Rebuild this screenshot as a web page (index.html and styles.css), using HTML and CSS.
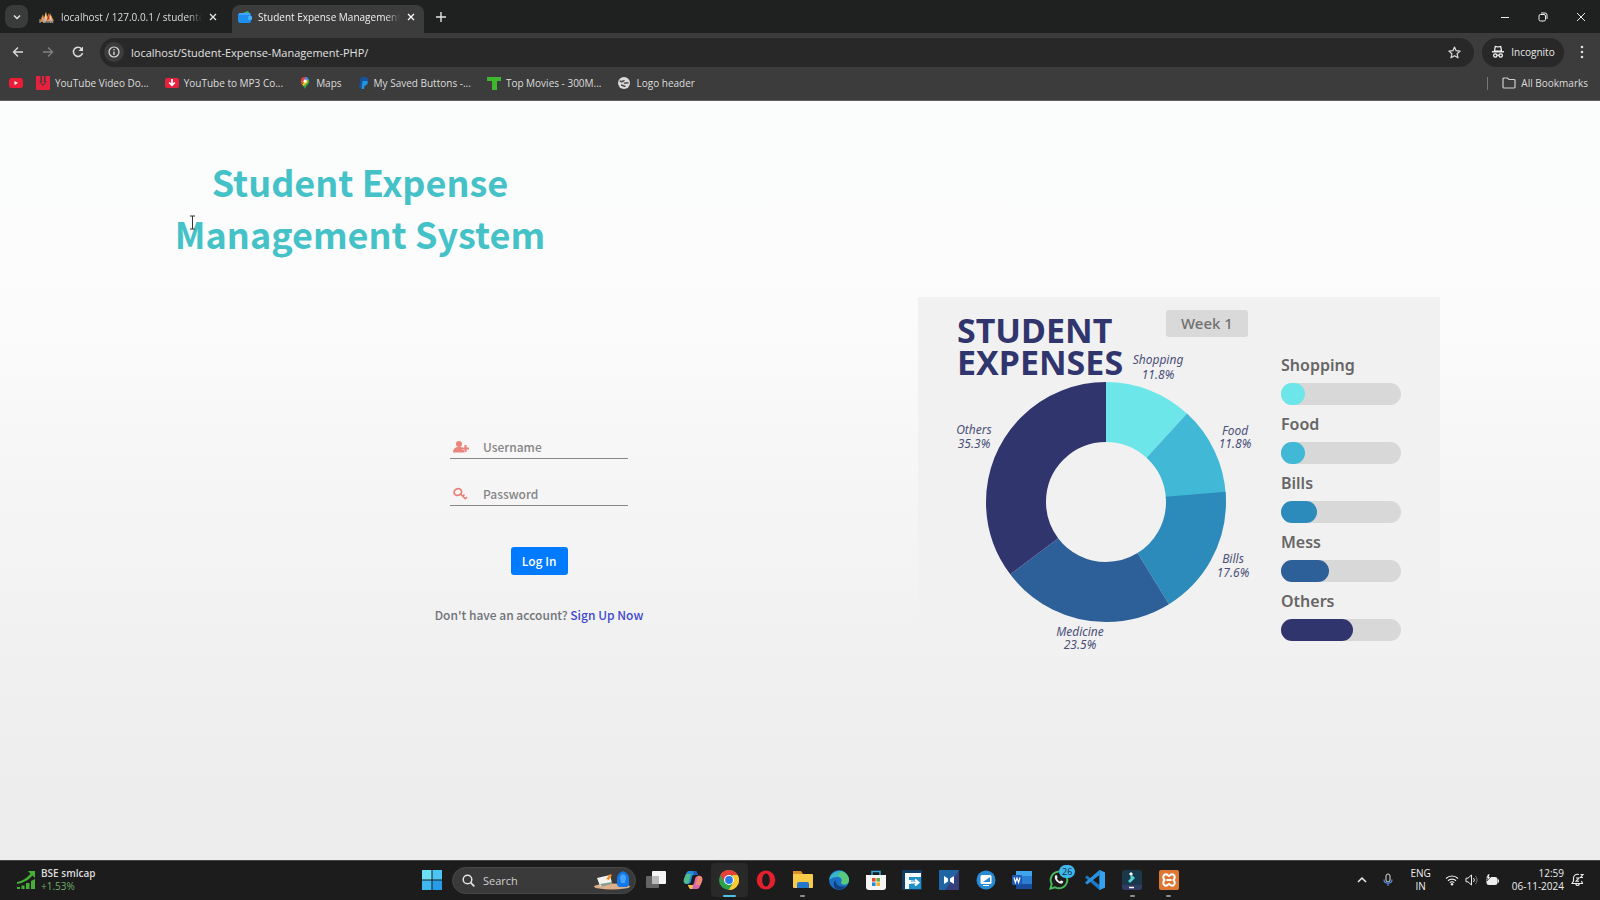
FILE: index.html
```html
<!DOCTYPE html>
<html lang="en">
<head>
<meta charset="utf-8">
<title>Student Expense Management System</title>
<link rel="stylesheet" href="styles.css">
</head>
<body>
<header class="browser">
  <div class="tabstrip">
    <button class="tab-search" aria-label="Search tabs"><svg width="10" height="10" viewBox="0 0 10 10"><path d="M2 3.5l3 3 3-3" fill="none" stroke="#e4e4e4" stroke-width="1.5"/></svg></button>
    <div class="tab">
      <svg class="fav" width="16" height="14" viewBox="0 0 16 14"><path d="M1 12L4 4l1 4 2-6 1 5 2-4 1 5 1-3 3 6z" fill="#e8862d"/><path d="M5 10l2-8 1 8zM10 10l1-7 2 7z" fill="#f3d6ab"/><path d="M8 10l2-6 .6 6z" fill="#d52d22"/><path d="M1 9v4M3 7l2 6 1-5 1 5M9 13v-3h2v3M12 13v-4l2 4" stroke="#b9b3ad" fill="none"/></svg>
      <span class="tab-title">localhost / 127.0.0.1 / studentexpense</span>
      <button class="x" aria-label="Close tab"><svg width="8" height="8" viewBox="0 0 8 8"><path d="M1 1l6 6M7 1l-6 6" stroke="#e4e4e4" stroke-width="1.3"/></svg></button>
    </div>
    <div class="tab active">
      <svg class="fav" width="14" height="14" viewBox="0 0 14 14"><path d="M2 4l8-3 2 3z" fill="#38b36b"/><rect y="3" width="13" height="10" rx="2" fill="#1f8fef"/><path d="M1 4h11" stroke="#64b8ff"/><rect x="10" y="6" width="4" height="4" rx="1" fill="#47b1ff"/></svg>
      <span class="tab-title">Student Expense Management System</span>
      <button class="x" aria-label="Close tab"><svg width="8" height="8" viewBox="0 0 8 8"><path d="M1 1l6 6M7 1l-6 6" stroke="#fff" stroke-width="1.3"/></svg></button>
    </div>
    <button class="newtab" aria-label="New tab"><svg width="10" height="10" viewBox="0 0 10 10"><path d="M5 0v10M0 5h10" stroke="#e4e4e4" stroke-width="1.4"/></svg></button>
    <div class="winbtns">
      <button aria-label="Minimize"><svg width="10" height="10" viewBox="0 0 10 10"><path d="M1 5.5h8" stroke="#eee"/></svg></button>
      <button aria-label="Restore"><svg width="10" height="10" viewBox="0 0 10 10"><rect x="1" y="2.5" width="6.5" height="6.5" rx="1.5" fill="none" stroke="#eee"/><path d="M3 1h4a2 2 0 0 1 2 2v4" fill="none" stroke="#eee"/></svg></button>
      <button aria-label="Close"><svg width="10" height="10" viewBox="0 0 10 10"><path d="M1 1l8 8M9 1l-8 8" stroke="#eee"/></svg></button>
    </div>
  </div>
  <div class="toolbar">
    <button class="nav" aria-label="Back"><svg width="12" height="12" viewBox="0 0 12 12"><path d="M11 6H2M6 1.5L1.500 6 6 10.500" fill="none" stroke="#dcdcdc" stroke-width="1.4"/></svg></button>
    <button class="nav" aria-label="Forward"><svg width="12" height="12" viewBox="0 0 12 12"><path d="M1 6h9M6 1.500L10.500 6 6 10.500" fill="none" stroke="#808080" stroke-width="1.400"/></svg></button>
    <button class="nav" aria-label="Reload"><svg width="12" height="12" viewBox="0 0 12 12"><path d="M10.500 7A4.600 4.600 0 1 1 9.500 2.800" fill="none" stroke="#dcdcdc" stroke-width="1.500"/><path d="M11 .5v4.500H6.500z" fill="#dcdcdc"/></svg></button>
    <div class="omnibox">
      <button class="info" aria-label="Site information"><svg width="12" height="12" viewBox="0 0 12 12"><circle cx="6" cy="6" r="5" fill="none" stroke="#dcdcdc" stroke-width="1.200"/><path d="M6 5.400V9M6 3v1.300" stroke="#dcdcdc" stroke-width="1.300"/></svg></button>
      <input class="url" aria-label="Address" value="localhost/Student-Expense-Management-PHP/">
      <button class="star" aria-label="Bookmark"><svg width="13" height="13" viewBox="0 0 13 13"><path d="M6.500 1l1.600 3.700 4 .4-3 2.700.9 4-3.500-2.100L3 11.800l.9-4-3-2.700 4-.4z" fill="none" stroke="#dcdcdc" stroke-width="1.200" stroke-linejoin="round"/></svg></button>
    </div>
    <button class="incog"><svg width="14" height="14" viewBox="0 0 14 14"><path d="M3.500 6l.8-4.500L7 2l2.700-.5.8 4.500z" fill="none" stroke="#fff" stroke-width="1.200"/><path d="M1 6.800h12" stroke="#fff" stroke-width="1.300"/><circle cx="4.300" cy="10.500" r="1.700" fill="none" stroke="#fff" stroke-width="1.200"/><circle cx="9.700" cy="10.500" r="1.700" fill="none" stroke="#fff" stroke-width="1.200"/><path d="M6 10.200h2" stroke="#fff"/></svg>Incognito</button>
    <button class="kebab" aria-label="Menu"><svg width="4" height="14" viewBox="0 0 4 14"><g fill="#dcdcdc"><circle cx="2" cy="2" r="1.300"/><circle cx="2" cy="7" r="1.300"/><circle cx="2" cy="12" r="1.300"/></g></svg></button>
  </div>
  <nav class="bookmarks" aria-label="Bookmarks">
    <a href="#" aria-label="YouTube"><svg width="14" height="10" viewBox="0 0 14 10"><rect width="14" height="10" rx="2.500" fill="#ea1c38"/><path d="M5.500 3v4l3.500-2z" fill="#fff"/></svg></a>
    <a href="#"><svg width="14" height="14" viewBox="0 0 14 14"><rect width="14" height="14" rx="1" fill="#e8223e"/><path d="M4.500 0v5.500H3l4 4.500 4-4.500H9.500V0H8v5H6V0z" fill="#3c3c3c"/><path d="M6.300 0h1.400v6h1.800L7 8.500 4.500 6h1.800z" fill="#e8223e"/></svg>YouTube Video Do...</a>
    <a href="#"><svg width="14" height="14" viewBox="0 0 14 14"><rect y="2" width="14" height="10" rx="2" fill="#e8223e"/><path d="M7 3v6M4.200 6.500L7 9.300l2.800-2.800" stroke="#fff" stroke-width="1.700" fill="none"/></svg>YouTube to MP3 Co...</a>
    <a href="#"><svg width="12" height="14" viewBox="0 0 12 14"><path d="M6 1a4.300 4.300 0 0 1 4.300 4.300C10.300 8.500 7.500 9 6 13c-.8-2-1.500-3-2.500-4z" fill="#34a853"/><path d="M2 3.200A4.300 4.300 0 0 1 6 1v4z" fill="#ea4335"/><path d="M6 1a4.300 4.300 0 0 1 3.700 2.200L6 7z" fill="#4285f4"/><path d="M2.400 2.800L5 5.500 3 8.500C1.500 7 1.300 4.500 2.400 2.800z" fill="#ea4335"/><path d="M3 8.500L8 3.500 9 6 4.500 10z" fill="#fbbc04"/><circle cx="6" cy="5.200" r="1.600" fill="#fff"/></svg>Maps</a>
    <a href="#"><svg width="11" height="14" viewBox="0 0 11 14"><path d="M3 1h4c2.500 0 3.500 1.500 3 3.500S8 8 6 8H4l-.8 4H1z" fill="#17529e"/><path d="M4.500 5h4.500c1.500 0 1 4.800-2.500 4.800L6 13H3.500z" fill="#1b97e4"/></svg>My Saved Buttons -...</a>
    <a href="#"><svg width="14" height="14" viewBox="0 0 14 14"><path d="M0 1h14v4h-4v9H5V5H0z" fill="#3fb62f"/></svg>Top Movies - 300M...</a>
    <a href="#"><svg width="14" height="14" viewBox="0 0 14 14"><circle cx="7" cy="7" r="6" fill="#dadada"/><path d="M3 4.500c1.500 3 3-.5 4.500.5M7 7.500c1.500-1.500 3 .5 4.500-1M4 9c2 0 2.500 2 4.500 1" stroke="#454545" stroke-width="1.500" fill="none"/></svg>Logo header</a>
    <a href="#" class="all"><svg width="14" height="12" viewBox="0 0 14 12"><path d="M1 2.500V10a1 1 0 0 0 1 1h10a1 1 0 0 0 1-1V3.500a1 1 0 0 0-1-1H7L5.500 1H2a1 1 0 0 0-1 1z" fill="none" stroke="#d0d0d0" stroke-width="1.200"/></svg>All Bookmarks</a>
  </nav>
</header>

<main class="page">
  <section class="login">
    <h1>Student Expense<br>Management System</h1>
    <form class="form">
      <label class="field"><svg width="16" height="14" viewBox="0 0 16 14"><g fill="#ea857e"><circle cx="6" cy="4" r="3"/><path d="M0 12.500C0 9 2 7 6 7s5.500 2 5.500 5.500z"/></g><path d="M12.500 5v7M9 8.500h7" stroke="#f8f8f8" stroke-width="3"/><path d="M12.500 5v7M9 8.500h7" stroke="#ea857e" stroke-width="2.200"/></svg><input type="text" placeholder="Username" aria-label="Username"></label>
      <label class="field"><svg width="16" height="14" viewBox="0 0 16 14"><g fill="none" stroke="#ec7d75" stroke-width="1.700"><ellipse cx="4.800" cy="5" rx="3.800" ry="3.300" transform="rotate(-25 4.800 5)"/><path d="M7 6.500l5.500 5.500M9.500 9.500l2-2M12 12l2-2"/></g></svg><input type="password" placeholder="Password" aria-label="Password"></label>
      <button class="submit" type="button">Log In</button>
      <p class="signup">Don't have an account? <a href="#">Sign Up Now</a></p>
    </form>
  </section>

  <section class="summary">
    <figure class="card">
      <div class="chart">
        <div class="chart-head">
          <h2>STUDENT<br>EXPENSES</h2>
          <span class="week">Week 1</span>
        </div>
        <svg class="donut" viewBox="0 50 340 310">
          <g fill="none" stroke-width="60" transform="rotate(-90 188 205)">
            <circle cx="188" cy="205" r="90" pathLength="100" stroke="#6ce6e8" stroke-dasharray="11.800 100"/>
            <circle cx="188" cy="205" r="90" pathLength="100" stroke="#41b8d5" stroke-dasharray="12.300 100" stroke-dashoffset="-11.800"/>
            <circle cx="188" cy="205" r="90" pathLength="100" stroke="#2c8bba" stroke-dasharray="17.600 100" stroke-dashoffset="-23.600"/>
            <circle cx="188" cy="205" r="90" pathLength="100" stroke="#2d5f98" stroke-dasharray="23.500 100" stroke-dashoffset="-41.200"/>
            <circle cx="188" cy="205" r="90" pathLength="100" stroke="#31356e" stroke-dasharray="35.300 100" stroke-dashoffset="-64.700"/>
          </g>
          <g class="slice-labels">
            <text x="240" y="67">Shopping</text><text x="240" y="82">11.8%</text>
            <text x="317" y="138">Food</text><text x="317" y="151">11.8%</text>
            <text x="315" y="266">Bills</text><text x="315" y="280">17.6%</text>
            <text x="162" y="339">Medicine</text><text x="162" y="352">23.5%</text>
            <text x="56" y="137">Others</text><text x="56" y="151">35.3%</text>
          </g>
        </svg>
      </div>
      <ul class="legend">
        <li>Shopping<div class="bar"><div class="fill shopping" style="width:20%"></div></div></li>
        <li>Food<div class="bar"><div class="fill food" style="width:20%"></div></div></li>
        <li>Bills<div class="bar"><div class="fill bills" style="width:30%"></div></div></li>
        <li>Mess<div class="bar"><div class="fill mess" style="width:40%"></div></div></li>
        <li>Others<div class="bar"><div class="fill others" style="width:60%"></div></div></li>
      </ul>
    </figure>
  </section>
  <svg class="cursor" width="7" height="15" viewBox="0 0 7 15"><path d="M1 1h5M3.500 1v13M1 14h5" stroke="#333" fill="none"/></svg>
</main>

<footer class="taskbar">
  <div class="widget">
    <svg width="20" height="20" viewBox="0 0 20 20"><g fill="#45b035"><path d="M12 1h7v7l-2.500-2.500C13 10 7 13 1 14v-2c5-1 10-4 13.500-8z"/><rect x="1" y="17" width="3" height="2"/><rect x="5.500" y="15.500" width="3" height="3.500"/><rect x="10" y="13" width="3.500" height="6"/><path d="M15 11l4-2v10h-4z"/></g></svg>
    <div><b>BSE smlcap</b><span>+1.53%</span></div>
  </div>
  <div class="center">
    <button class="start" aria-label="Start"><svg width="20" height="20" viewBox="0 0 20 20"><path d="M0 0h9.500v9.500H0z" fill="#6be0f7"/><path d="M10.500 0H20v9.500h-9.500z" fill="#4cc5f4"/><path d="M0 10.500h9.500V20H0z" fill="#3fb7f1"/><path d="M10.500 10.500H20V20h-9.500z" fill="#279ce9"/></svg></button>
    <label class="search"><svg width="13" height="13" viewBox="0 0 13 13"><circle cx="5.500" cy="5.500" r="4.300" fill="none" stroke="#e4e4e4" stroke-width="1.500"/><path d="M8.700 8.700l3.600 3.600" stroke="#e4e4e4" stroke-width="1.700"/></svg><input type="text" placeholder="Search" aria-label="Search"><svg width="38" height="20" viewBox="0 0 38 20"><ellipse cx="19" cy="16.500" rx="18" ry="3" fill="#dcb08c"/><path d="M4 8l13-3 2 8-12 3z" fill="#f2f2ee"/><path d="M7 14l12-2v2L9 16.500z" fill="#8c9b8b"/><path d="M13 9l4-5 2 1-3 5z" fill="#ee932f"/><path d="M24 8q0-4 6-7 6 3 6 7v7l-2 2h-8l-2-2z" fill="#1578e8"/><path d="M27 8q0-3 3-4 3 1 3 4l-1 5h-4z" fill="#45a3ff"/></svg></label>
    <div class="apps">
      <button aria-label="Task View"><svg width="20" height="20" viewBox="0 0 20 20"><rect x="6" y="1" width="14" height="13" rx="1" fill="#f4f4f4"/><rect x="0" y="6" width="13" height="12" rx="1" fill="#777" opacity=".8"/><rect x="6" y="6" width="7" height="8" fill="#b9b9b9"/></svg></button>
      <button aria-label="Copilot"><svg width="20" height="20" viewBox="0 0 20 20"><path d="M6 1h6c2 0 2 2 3 4h-4c-2 0-2 2-3 6-1 3-2 3-4 3-3 0-4-2-3-5l2-5c.6-2 1.500-3 3-3z" fill="#248fd8"/><path d="M1 9l2-5h5L5.500 13C3 15 0 13 1 9z" fill="#54bc8a"/><path d="M14 19H8c-2 0-2-2-3-4h4c2 0 2-2 3-6 1-3 2-3 4-3 3 0 4 2 3 5l-2 5c-.6 2-1.500 3-3 3z" fill="#d768ae"/><path d="M5 15h5l-1 4c-3 0-3-2-4-4z" fill="#f6c443"/><path d="M15 6c3-1 5 2 4 5l-1.500 4h-5z" fill="#f08b72"/><path d="M12 1c2 0 2 2 3 4h-4l-1-4z" fill="#2459bd"/></svg></button>
      <button class="current" aria-label="Chrome"><svg width="20" height="20" viewBox="0 0 20 20"><circle cx="10" cy="10" r="10" fill="#2ca14c"/><path d="M10 0a10 10 0 0 1 8.700 5H10L5.700 12.500 1.300 5A10 10 0 0 1 10 0z" fill="#e5403a"/><path d="M18.700 5A10 10 0 0 1 9.700 20L14.300 12.500 13.500 5z" fill="#fccb33"/><circle cx="10" cy="10" r="5" fill="#fff"/><circle cx="10" cy="10" r="3.900" fill="#2878e8"/></svg></button>
      <button aria-label="Opera"><svg width="20" height="20" viewBox="0 0 20 20"><path fill-rule="evenodd" d="M10 .5a9.300 9.500 0 1 0 0 19 9.300 9.500 0 0 0 0-19zm0 3c2.200 0 3.800 3 3.800 6.500s-1.600 6.500-3.800 6.500S6.200 13.500 6.200 10 7.800 3.500 10 3.500z" fill="#e2202f"/></svg></button>
      <button class="open" aria-label="File Explorer"><svg width="20" height="20" viewBox="0 0 20 20"><path d="M0 1h8l2 3h9v5H0z" fill="#de8e2c"/><rect y="4" width="20" height="14" rx="1" fill="#f8cb4b"/><path d="M4 18v-4q0-2 2-2h8q2 0 2 2v4z" fill="#2277cc"/></svg></button>
      <button aria-label="Edge"><svg width="20" height="20" viewBox="0 0 20 20"><circle cx="10" cy="10" r="10" fill="#1c6fc5"/><path d="M.5 8A10 10 0 0 1 20 10c0 3-2 4.500-4.500 4.500S12 13 12.500 11 11 7 8 7 2 8 .5 10z" fill="#38b5c9"/><path d="M12 1c5 1 8 5 8 9s-5 5.500-7 4 0-2 0-4-1-4-4-4z" fill="#59cb78"/><path d="M7 10c-1 4 3 8 10 6-4 5-11 4-12 0-.5-3 0-5 2-6z" fill="#123f82"/></svg></button>
      <button aria-label="Microsoft Store"><svg width="20" height="20" viewBox="0 0 20 20"><path d="M6 5V1.500h8V5" fill="none" stroke="#37a7dd" stroke-width="1.500"/><path d="M0 5h20v12q0 3-3 3H3q-3 0-3-3z" fill="#f5f5f5"/><path d="M6 8h3.600v3.600H6z" fill="#e24a2c"/><path d="M10.400 8H14v3.600h-3.600z" fill="#69aa3e"/><path d="M6 12.400h3.600V16H6z" fill="#268bd2"/><path d="M10.400 12.400H14V16h-3.600z" fill="#f1ae29"/></svg></button>
      <button aria-label="File transfer"><svg width="20" height="20" viewBox="0 0 20 20"><rect width="20" height="20" rx="1" fill="#123c61"/><path d="M3 3h16v16H3z" fill="#2190c9"/><path d="M3 19V3h16v4H7v3h5v4H7v5z" fill="#f5fbff"/><path d="M9 12.500h7M13 9.500l3.500 3-3.500 3" stroke="#2190c9" stroke-width="4" fill="none"/><path d="M8 12.500h8M13 9.500l3.500 3-3.500 3" stroke="#fff" stroke-width="2" fill="none"/></svg></button>
      <button aria-label="Media app"><svg width="20" height="20" viewBox="0 0 20 20"><path d="M0 0h20v20H0z" fill="#2065a3"/><path d="M20 0v20H6z" fill="#373e7e"/><path d="M5 6l4 2.500v3L5 14zM15 6l-4 2.500v3l4 2.500z" fill="#fff"/></svg></button>
      <button aria-label="Remote app"><svg width="20" height="20" viewBox="0 0 20 20"><circle cx="10" cy="10" r="9.500" fill="#2a8bd5"/><rect x="4.500" y="5" width="11" height="9" rx="1.500" fill="#fff"/><path d="M7 12l7-5v5z" fill="#2a8bd5"/><path d="M7 15.500h6" stroke="#fff"/></svg></button>
      <button aria-label="Word"><svg width="20" height="20" viewBox="0 0 20 20"><rect x="4" y="1" width="16" height="18" rx="1" fill="#2b7cd3"/><path d="M4 1h16v5H4z" fill="#41a5ee"/><path d="M4 14h16v5H4z" fill="#174b9b"/><rect y="5" width="10" height="10" rx="1" fill="#1e59b4"/><path d="M2 7.500l1.400 5L5 8l1.600 4.500 1.400-5" fill="none" stroke="#fff" stroke-width="1.200"/></svg></button>
      <button aria-label="WhatsApp"><svg width="20" height="20" viewBox="0 0 20 20"><path d="M1.500 18.500l1.200-4.600a8.300 8.300 0 1 1 3.500 3.400z" fill="none" stroke="#49b95d" stroke-width="2"/><path d="M6 6c1-2 2-.5 2.500 1 .3 1-1 1 0 2.400 1 1.400 2.300 2.500 3 1.600 1-1 1.500-.4 2.500.3 1 .8-1 3-3 2.300C8 12.500 5 9 6 6z" fill="#f2f2f2"/></svg><span class="badge">26</span></button>
      <button aria-label="Visual Studio Code"><svg width="20" height="20" viewBox="0 0 20 20"><path d="M14.500 0L20 2.500v15L14.500 20 0 7.500 2 5.500l12.500 9.500z" fill="#1c78c4"/><path d="M14.500 0v5L2 14.500 0 12.500z" fill="#2a91df"/><path d="M14.500 0L20 2.500v15L14.500 20z" fill="#35a0ee"/></svg></button>
      <button class="open" aria-label="Filmora"><svg width="20" height="20" viewBox="0 0 20 20"><rect width="20" height="20" rx="3" fill="#1b384b"/><path d="M0 15h20v2q0 3-3 3H3q-3 0-3-3z" fill="#303b66"/><path d="M7 4l2-2 2 2-2 2z" fill="#fff"/><path d="M6 11l3-3-1-1 2-2 3 3-5 5z" fill="#55d4d4"/><path d="M7 17.500h5" stroke="#fff" stroke-width="1.500"/></svg></button>
      <button class="open" aria-label="XAMPP"><svg width="20" height="20" viewBox="0 0 20 20"><rect width="20" height="20" rx="2" fill="#dc7833"/><path d="M6 4.500c2.500-1 3 1.500 4 1.500s1.500-2.500 4-1.500 2 4 .500 5.500c1.500 1.500 2 4.500-.500 5.500s-3-1.500-4-1.500-1.500 2.500-4 1.500-2-4-.500-5.500C4 8.500 3.500 5.500 6 4.500z" fill="none" stroke="#fff" stroke-width="2"/><path d="M7.500 10h5" stroke="#fff" stroke-width="2"/></svg></button>
    </div>
  </div>
  <div class="tray">
    <svg width="10" height="8" viewBox="0 0 10 8"><path d="M1 6l4-4 4 4" fill="none" stroke="#eee" stroke-width="1.500"/></svg>
    <svg class="mic" width="10" height="14" viewBox="0 0 10 14"><rect x="3" y="1" width="4" height="8" rx="2" fill="none" stroke="#ddd"/><path d="M1 6.500c0 5 8 5 8 0M5 10.500V13" fill="none" stroke="#4f8ee0" stroke-width="1.200"/></svg>
    <span class="lang">ENG<br>IN</span>
    <div class="status">
      <svg width="14" height="12" viewBox="0 0 14 12"><g fill="none" stroke="#eee" stroke-width="1.200"><path d="M1 4.500a8.500 8.500 0 0 1 12 0M3 6.700a5.700 5.700 0 0 1 8 0M4.800 8.700a3 3 0 0 1 4.400 0"/></g><circle cx="7" cy="10.300" r="1.200" fill="#eee"/></svg>
      <svg width="14" height="12" viewBox="0 0 14 12"><path d="M1 4.200h2L6.500 1v10L3 7.800H1z" fill="none" stroke="#eee"/><path d="M8.500 4a3 3 0 0 1 0 4" fill="none" stroke="#eee"/><path d="M10.500 2a6 6 0 0 1 0 8" fill="none" stroke="#777"/></svg>
      <svg width="14" height="12" viewBox="0 0 14 12"><rect x="2" y="3.500" width="10" height="7" rx="1.500" fill="#eee" stroke="#eee"/><path d="M13.500 5.500v3" stroke="#eee" stroke-width="1.500"/><path d="M3 0L1 4h2L2 7l4-4H4l1-3z" fill="#fff" stroke="#1c1c1c" stroke-width=".6"/></svg>
    </div>
    <span class="clock">12:59<br>06-11-2024</span>
    <svg width="13" height="14" viewBox="0 0 13 14"><path d="M8 1.500C4.500.500 2.500 3 2.500 5v3L1 10.500h10.500L10.500 8M4.800 11c.5 2 3 2 3.500 0M5 5h3l-3 3.300h3M9.500 1.500H12L9.500 4.500H12" fill="none" stroke="#eee" stroke-width="1.100"/></svg>
  </div>
</footer>
</body>
</html>
```
FILE: styles.css
```css
* { box-sizing: border-box; }
body {
  margin: 0;
  min-height: 100vh;
  display: flex;
  flex-direction: column;
  font-family: "Open Sans", "Noto Sans", sans-serif;
  font-size: 11px;
  color: #dcdcdc;
}
button {
  border: 0;
  padding: 0;
  background: none;
  color: inherit;
  font: inherit;
  display: flex;
  align-items: center;
  justify-content: center;
}
input { border: 0; padding: 0; background: none; font: inherit; color: inherit; min-width: 0; outline: 0; }
a { color: inherit; text-decoration: none; }
svg { flex: none; display: block; }

.browser { background: #3c3c3c; border-bottom: 1px solid #606060; font-size: 10px; }
.tabstrip { display: flex; align-items: center; height: 33px; background: #1f2120; padding-left: 5px; }
.tab-search { width: 23px; height: 23px; border-radius: 8px; background: #3a3b3b; margin-right: 5px; }
.tab { display: flex; align-items: center; gap: 6px; width: 199px; height: 28px; padding: 0 14px 4px 6px; align-self: flex-end; }
.tab.active { width: 192px; background: #3c3c3c; border-radius: 8px 8px 0 0; padding: 0 8px 4px 6px; color: #f0f0f0; }
.tab-title {
  flex: 1;
  white-space: nowrap;
  overflow: hidden;
  mask-image: linear-gradient(90deg, #000 90%, transparent);
}
.tab .x { width: 10px; height: 16px; }
.newtab { width: 34px; height: 28px; }
.winbtns { margin-left: auto; display: flex; }
.winbtns button { width: 38px; height: 33px; }

.toolbar { display: flex; align-items: center; height: 38px; padding: 0 12px 0 3px; }
.nav { width: 30px; height: 28px; }
.omnibox { flex: 1; display: flex; align-items: center; height: 29px; border-radius: 16px; background: #282828; margin: 0 8px 0 7px; padding: 0 12px 0 4px; }
.info { width: 20px; height: 20px; border-radius: 50%; background: #3c3c3c; margin-right: 7px; }
.url { flex: 1; font-size: 11px; color: #e2e2e2; }
.star { width: 16px; height: 16px; }
.incog { height: 29px; width: 82px; border-radius: 16px; background: #282828; gap: 6px; color: #e8e8e8; }
.kebab { width: 18px; height: 28px; margin-left: 9px; margin-right: -3px; }

.bookmarks { display: flex; align-items: center; height: 29px; gap: 13px; padding: 0 12px 5px 9px; }
.bookmarks a { display: flex; align-items: center; gap: 5px; margin-right: 3px; white-space: nowrap; }
.bookmarks a:first-child { margin-right: 0; }
.bookmarks .all { margin: 0 0 0 auto; border-left: 1px solid #777; padding-left: 14px; line-height: 13px; }

.page {
  position: relative;
  flex: 1;
  display: grid;
  grid-template-columns: 45% 55%;
  background: linear-gradient(#fbfcfc, #fcfcfc 24%, #f1f1f1 70%, #ececec);
  font-family: "Noto Sans CJK SC", "Noto Sans", sans-serif;
}
.cursor { position: absolute; left: 189px; top: 114px; }
.login { padding-top: 54px; }
h1 { margin: 0; text-align: center; font-size: 36px; line-height: 52px; font-weight: 700; color: #44c2c8; }
.form { width: 178px; margin: 176px 92px 0 auto; display: flex; flex-direction: column; align-items: center; font-size: 12px; font-weight: 500; color: #777; }
.field { display: flex; align-items: center; gap: 14px; width: 100%; height: 24px; padding-left: 3px; border-bottom: 1px solid #888; margin-bottom: 23px; }
.field input { flex: 1; }
.field input::placeholder { color: #868686; opacity: 1; }
.submit { width: 57px; height: 28px; padding-bottom: 2px; border-radius: 3px; background: #007bff; color: #fff; margin-top: 18px; }
.signup { margin: 30px 0 0; line-height: 20px; white-space: nowrap; color: #6f7276; }
.signup a { color: #3f48d0; }

.summary { padding: 196px 160px 0 198px; }
.card { margin: 0; display: flex; background: #f1f1f1; font-family: "Noto Sans", sans-serif; }
.chart { width: 340px; flex: none; }
.chart-head { display: flex; justify-content: space-between; align-items: flex-start; padding: 13px 10px 0 39px; height: 50px; }
h2 { margin: 4px 0 0; font-size: 34px; line-height: 32px; font-weight: 700; color: #31356e; }
.week { width: 82px; line-height: 27px; border-radius: 3px; background: #d9d9d9; color: #707070; font-size: 15px; font-weight: 500; text-align: center; }
.donut { width: 340px; height: 310px; }
.slice-labels { font-size: 12px; font-style: italic; text-anchor: middle; fill: #4c5078; }
.legend { list-style: none; margin: 57px 0 0 23px; padding: 0; width: 120px; font-size: 16px; line-height: 22px; font-weight: 600; color: #666; }
.legend li { margin-bottom: 8px; }
.legend li:last-child { margin-bottom: 0; }
.bar { margin-top: 7px; height: 22px; border-radius: 11px; background: #d8d8d8; }
.fill { height: 100%; border-radius: 11px; }
.shopping { background: #6ce6e8; }
.food { background: #41b8d5; }
.bills { background: #2c8bba; }
.mess { background: #2d5f98; }
.others { background: #31356e; }

.taskbar { display: grid; grid-template-columns: 1fr auto 1fr; align-items: center; height: 40px; padding-bottom: 1px; background: #1c1c1c; border-top: 1px solid #444; }
.widget { display: flex; align-items: center; gap: 5px; padding-left: 16px; font-size: 10px; line-height: 13px; }
.widget b { display: block; font-weight: 600; }
.widget span { color: #6fae6b; }
.center { display: flex; align-items: center; padding-left: 9px; }
.start { margin-right: 10px; }
.search { display: flex; align-items: center; width: 184px; height: 27px; border-radius: 14px; background: #3a3a3a; border: 1px solid #484848; padding: 0 4px 0 9px; gap: 8px; }
.search input { flex: 1; }
.search input::placeholder { color: #cfcfcf; opacity: 1; }
.apps { display: grid; grid-template-columns: repeat(15, 1fr); width: 549px; margin-left: 2px; }
.apps button { position: relative; height: 34px; }
.apps .current { background: #292929; border-radius: 4px; }
.apps .current::after, .apps .open::after { content: ""; position: absolute; bottom: 0; width: 5px; height: 2px; border-radius: 1px; background: #8e8e8e; }
.apps .current::after { width: 13px; background: #4cc2e8; }
.badge { position: absolute; top: 2px; right: 2px; width: 16px; line-height: 13px; border-radius: 7px; background: #3fb6ee; color: #0d2a3a; font-size: 9px; text-align: center; }
.tray { display: flex; align-items: center; justify-content: flex-end; padding-right: 16px; font-size: 10px; line-height: 13px; color: #eee; }
.mic { margin-left: 16px; }
.lang { margin: 0 14px 0 17px; text-align: center; }
.status { display: flex; gap: 6px; }
.clock { margin: 0 7px 0 13px; text-align: right; }
```
